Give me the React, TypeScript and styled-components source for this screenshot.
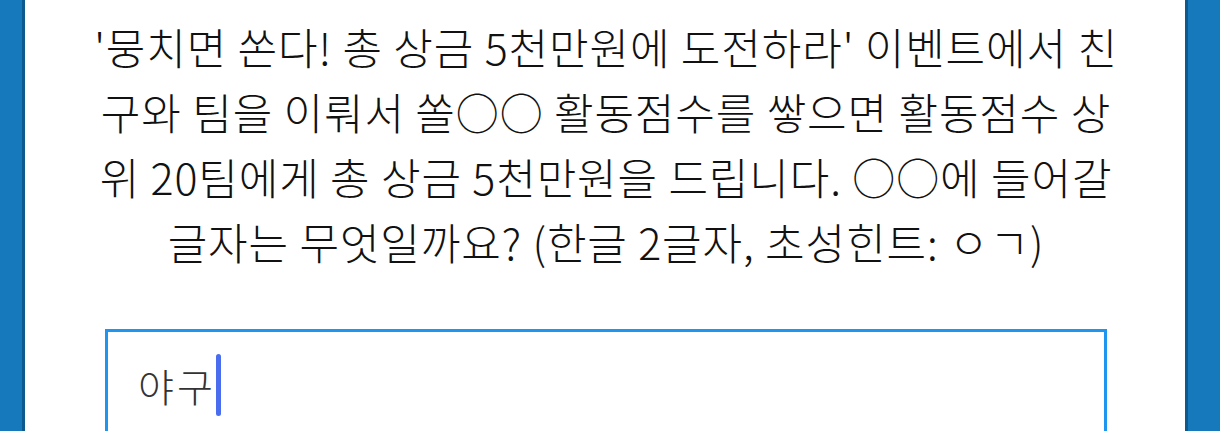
import React from "react";
import styled, { createGlobalStyle } from "styled-components";

const GlobalStyle = createGlobalStyle`
  html, body {
    margin: 0;
    padding: 0;
    background: #1679bb;
    overflow: hidden;
  }
`;

const Page = styled.div`
  display: flex;
  justify-content: center;
  padding: 0 32px 0 22px;
  height: 431px;
  background: #1679bb;
`;

const Panel = styled.div`
  flex: 1;
  display: flex;
  flex-direction: column;
  background: #ffffff;
  border-left: 3px solid #0d5b8e;
  border-right: 3px solid #0d5b8e;
  padding: 14px 78px 0 80px;
  overflow: hidden;
`;

const Question = styled.p`
  margin: 0 -70px;
  text-align: center;
  font-family: "Noto Sans CJK KR", "Noto Sans", sans-serif;
  font-size: 43px;
  font-weight: 300;
  line-height: 65px;
  color: #111111;
  letter-spacing: 0.9px;
`;

const AnswerBox = styled.div`
  margin-top: 55px;
  height: 140px;
  border: 3px solid #1e96ef;
  padding: 22px 32px 22px 30px;
  display: flex;
  align-items: flex-start;
`;

const AnswerText = styled.span`
  font-family: "Noto Sans CJK KR", "Noto Sans", sans-serif;
  font-size: 39px;
  font-weight: 300;
  line-height: 62px;
  letter-spacing: 3px;
  color: #333333;
`;

const Caret = styled.span`
  display: inline-block;
  width: 5px;
  height: 62px;
  border-radius: 3px;
  background: #4a6df0;
`;

const lines = [
  "'뭉치면 쏜다! 총 상금 5천만원에 도전하라' 이벤트에서 친",
  "구와 팀을 이뤄서 쏠○○ 활동점수를 쌓으면 활동점수 상",
  "위 20팀에게 총 상금 5천만원을 드립니다. ○○에 들어갈",
  "글자는 무엇일까요? (한글 2글자, 초성힌트: ㅇㄱ)",
];

const App = () => {
  return (
    <>
      <GlobalStyle />
      <Page>
        <Panel>
          <Question>
            {lines.map((line, i) => (
              <React.Fragment key={i}>
                {line}
                {i < lines.length - 1 && <br />}
              </React.Fragment>
            ))}
          </Question>
          <AnswerBox>
            <AnswerText>야구</AnswerText>
            <Caret />
          </AnswerBox>
        </Panel>
      </Page>
    </>
  );
};

export default App;
